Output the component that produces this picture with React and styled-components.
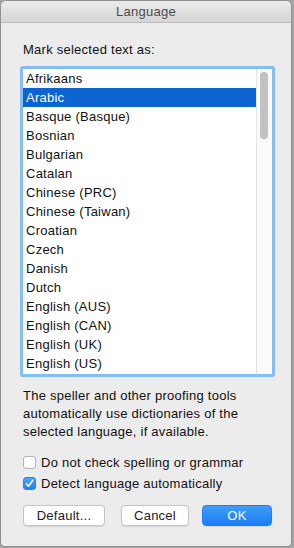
import React from "react";
import styled, { createGlobalStyle } from "styled-components";

const Global = createGlobalStyle`
  html, body { margin: 0; padding: 0; }
  body {
    background: #a4a4a4;
    font-family: "Liberation Sans", Arial, sans-serif;
    font-size: 13px;
    letter-spacing: 0.25px;
    -webkit-font-smoothing: antialiased;
  }
`;

const Screen = styled.div`
  width: 294px;
  height: 548px;
  padding: 1px 3px 2px 1px;
  box-sizing: border-box;
`;

const Window = styled.div`
  width: 290px;
  height: 545px;
  background: #ececec;
  border-radius: 5px 5px 4px 4px;
  overflow: hidden;
  display: flex;
  flex-direction: column;
  box-shadow: 0 0 0 0.5px rgba(0, 0, 0, 0.25);
`;

const TitleBar = styled.div`
  height: 21px;
  flex: none;
  background: linear-gradient(#ebebeb, #d5d5d5);
  border-bottom: 1px solid #bdbdbd;
  display: flex;
  align-items: center;
  justify-content: center;
  color: #4b4b4b;
  font-size: 13px;
`;

const Body = styled.div`
  display: flex;
  flex-direction: column;
  padding: 0 18px 0 22px;
`;

const Label = styled.div`
  margin-top: 19px;
  line-height: 16px;
  color: #111;
`;

const ListBox = styled.div`
  margin-top: 11px;
  width: 249px;
  height: 305px;
  background: #fff;
  border-radius: 1px;
  box-shadow: 0 0 0 3px #83bdf1;
  display: flex;
  overflow: hidden;
`;

const Rows = styled.div`
  width: 233px;
  display: flex;
  flex-direction: column;
`;

const Row = styled.div`
  height: 19px;
  flex: none;
  line-height: 19px;
  padding-left: 3px;
  color: ${(p) => (p.$selected ? "#fff" : "#111")};
  background: ${(p) => (p.$selected ? "#0b64d0" : "transparent")};
  white-space: nowrap;
`;

const Track = styled.div`
  width: 15px;
  border-left: 1px solid #e6e6e6;
  background: #fafafa;
  padding: 3px 0 0 3px;
  box-sizing: border-box;
`;

const Thumb = styled.div`
  width: 8px;
  height: 67px;
  border-radius: 4px;
  background: #c2c2c2;
`;

const Description = styled.p`
  margin: 13px 0 0;
  line-height: 18px;
  color: #111;
`;

const Checks = styled.div`
  margin-top: 11px;
  display: flex;
  flex-direction: column;
`;

const CheckRow = styled.label`
  height: 21px;
  display: flex;
  align-items: center;
  gap: 5px;
  color: #111;
`;

const Box = styled.span`
  width: 13px;
  height: 13px;
  box-sizing: border-box;
  border-radius: 3px;
  display: flex;
  align-items: center;
  justify-content: center;
  background: ${(p) => (p.$checked ? "linear-gradient(#4aa5fb, #1d80f6)" : "#fff")};
  border: 1px solid ${(p) => (p.$checked ? "#2a84ef" : "#b3b3b3")};
`;

const Buttons = styled.div`
  margin-top: 11px;
  display: flex;
  align-items: center;
`;

const Button = styled.button`
  width: ${(p) => p.$w}px;
  height: 21px;
  margin-left: ${(p) => p.$ml || 0}px;
  padding: 0;
  font-family: inherit;
  font-size: 13px;
  letter-spacing: 0.25px;
  border-radius: 4px;
  box-sizing: border-box;
  color: ${(p) => (p.$primary ? "#fff" : "#222")};
  background: ${(p) => (p.$primary ? "linear-gradient(#3f9df9, #1a7ef4)" : "#fff")};
  border: 1px solid ${(p) => (p.$primary ? "#1f7ff0" : "#c6c6c6")};
  box-shadow: 0 0.5px 1px rgba(0, 0, 0, 0.1);
`;

const languages = [
  "Afrikaans",
  "Arabic",
  "Basque (Basque)",
  "Bosnian",
  "Bulgarian",
  "Catalan",
  "Chinese (PRC)",
  "Chinese (Taiwan)",
  "Croatian",
  "Czech",
  "Danish",
  "Dutch",
  "English (AUS)",
  "English (CAN)",
  "English (UK)",
  "English (US)",
];

const Check = () => (
  <svg width="9" height="9" viewBox="0 0 9 9">
    <path d="M1.3 4.8 L3.5 7.2 L7.8 1.3" fill="none" stroke="#fff" strokeWidth="1.6" strokeLinecap="round" strokeLinejoin="round" />
  </svg>
);

export default function App() {
  return (
    <Screen>
      <Global />
      <Window>
        <TitleBar>Language</TitleBar>
        <Body>
          <Label>Mark selected text as:</Label>
          <ListBox>
            <Rows>
              {languages.map((l) => (
                <Row key={l} $selected={l === "Arabic"}>
                  {l}
                </Row>
              ))}
            </Rows>
            <Track>
              <Thumb />
            </Track>
          </ListBox>
          <Description>
            The speller and other proofing tools
            <br />
            automatically use dictionaries of the
            <br />
            selected language, if available.
          </Description>
          <Checks>
            <CheckRow>
              <Box />
              Do not check spelling or grammar
            </CheckRow>
            <CheckRow>
              <Box $checked>
                <Check />
              </Box>
              Detect language automatically
            </CheckRow>
          </Checks>
          <Buttons>
            <Button $w={82}>Default...</Button>
            <Button $w={68} $ml={16}>Cancel</Button>
            <Button $w={70} $ml={13} $primary>OK</Button>
          </Buttons>
        </Body>
      </Window>
    </Screen>
  );
}
